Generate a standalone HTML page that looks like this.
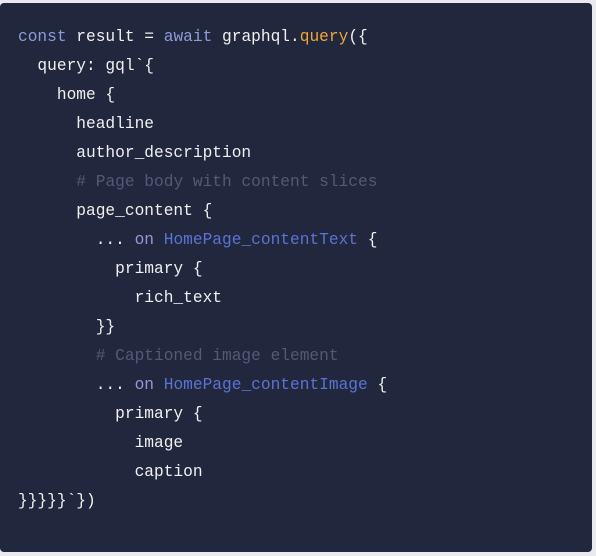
<!DOCTYPE html>
<html><head><style>
body{margin:0;background:#e9eaef;width:596px;height:556px;overflow:hidden}
.box{position:absolute;left:0;top:3px;width:592px;height:549px;background:#21273d;border-radius:4px}
pre{margin:0;position:absolute;left:18px;top:20px;font-family:"Liberation Mono",monospace;font-size:16.2px;line-height:29px;color:#f0f0f0}
.k{color:#8f9bd6}.f{color:#f2a43a}.t{color:#5c73d4}.c{color:#525a74}
</style></head><body><div class="box"><pre><span class="k">const</span> result = <span class="k">await</span> graphql.<span class="f">query</span>({
  query: gql`{
    home {
      headline
      author_description
      <span class="c"># Page body with content slices</span>
      page_content {
        ... <span class="k">on</span> <span class="t">HomePage_contentText</span> {
          primary {
            rich_text
        }}
        <span class="c"># Captioned image element</span>
        ... <span class="k">on</span> <span class="t">HomePage_contentImage</span> {
          primary {
            image
            caption
}}}}}`})</pre></div></body></html>
